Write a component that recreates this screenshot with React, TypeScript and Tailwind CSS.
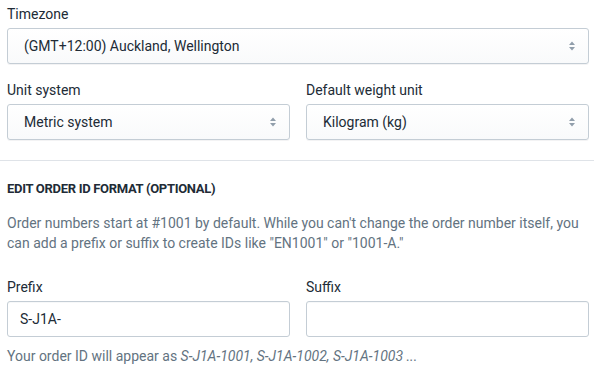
import React from 'react';

const Chevrons = () => (
  <svg width="8" height="12" viewBox="0 0 8 12" className="shrink-0">
    <path d="M4 1.5 L7 5 H1 Z" fill="#919eab" />
    <path d="M4 10.5 L7 7 H1 Z" fill="#919eab" />
  </svg>
);

const Select = ({ value }: { value: string }) => (
  <div className="flex h-9 items-center justify-between rounded-[3px] border border-[#c4cdd5] bg-gradient-to-b from-white to-[#f9fafb] pl-4 pr-3 text-[14px] text-[#212b36] shadow-[0_1px_0_0_rgba(22,29,37,0.05)]">
    <span>{value}</span>
    <Chevrons />
  </div>
);

const Field = ({ label, children }: { label: string; children: React.ReactNode }) => (
  <div className="flex flex-col">
    <label className="mb-1 text-[14px] leading-5 text-[#212b36]">{label}</label>
    {children}
  </div>
);

const TextInput = ({ value }: { value: string }) => (
  <div className="flex h-9 items-center rounded-[3px] border border-[#c4cdd5] bg-white px-3 text-[14px] text-[#212b36] shadow-[inset_0_1px_0_0_rgba(99,115,129,0.05)]">
    {value}
  </div>
);

export default function App() {
  return (
    <div className="h-[368px] w-[594px] overflow-hidden bg-white font-['Roboto',sans-serif]">
      {/* Store defaults */}
      <div className="pl-[7px] pr-[5px] pt-1">
        <Field label="Timezone">
          <Select value="(GMT+12:00) Auckland, Wellington" />
        </Field>
        <div className="mt-4 grid grid-cols-2 gap-4">
          <Field label="Unit system">
            <Select value="Metric system" />
          </Field>
          <Field label="Default weight unit">
            <Select value="Kilogram (kg)" />
          </Field>
        </div>
      </div>

      <div className="mt-5 border-t border-[#dfe3e8]" />

      {/* Order ID format */}
      <div className="pl-[7px] pr-[5px] pt-5">
        <h3 className="text-[13px] font-bold uppercase leading-4 tracking-[-0.3px] text-[#212b36]">
          Edit order ID format (optional)
        </h3>
        <p className="mt-4 text-[14px] leading-5 text-[#637381]">
          Order numbers start at #1001 by default. While you can't change the order number itself, you can add a
          prefix or suffix to create IDs like "EN1001" or "1001-A."
        </p>
        <div className="mt-6 grid grid-cols-2 gap-4">
          <Field label="Prefix">
            <TextInput value="S-J1A-" />
          </Field>
          <Field label="Suffix">
            <TextInput value="" />
          </Field>
        </div>
        <p className="mt-[9px] text-[14px] leading-5 text-[#637381]">
          Your order ID will appear as <em>S-J1A-1001, S-J1A-1002, S-J1A-1003 ...</em>
        </p>
      </div>
    </div>
  );
}
